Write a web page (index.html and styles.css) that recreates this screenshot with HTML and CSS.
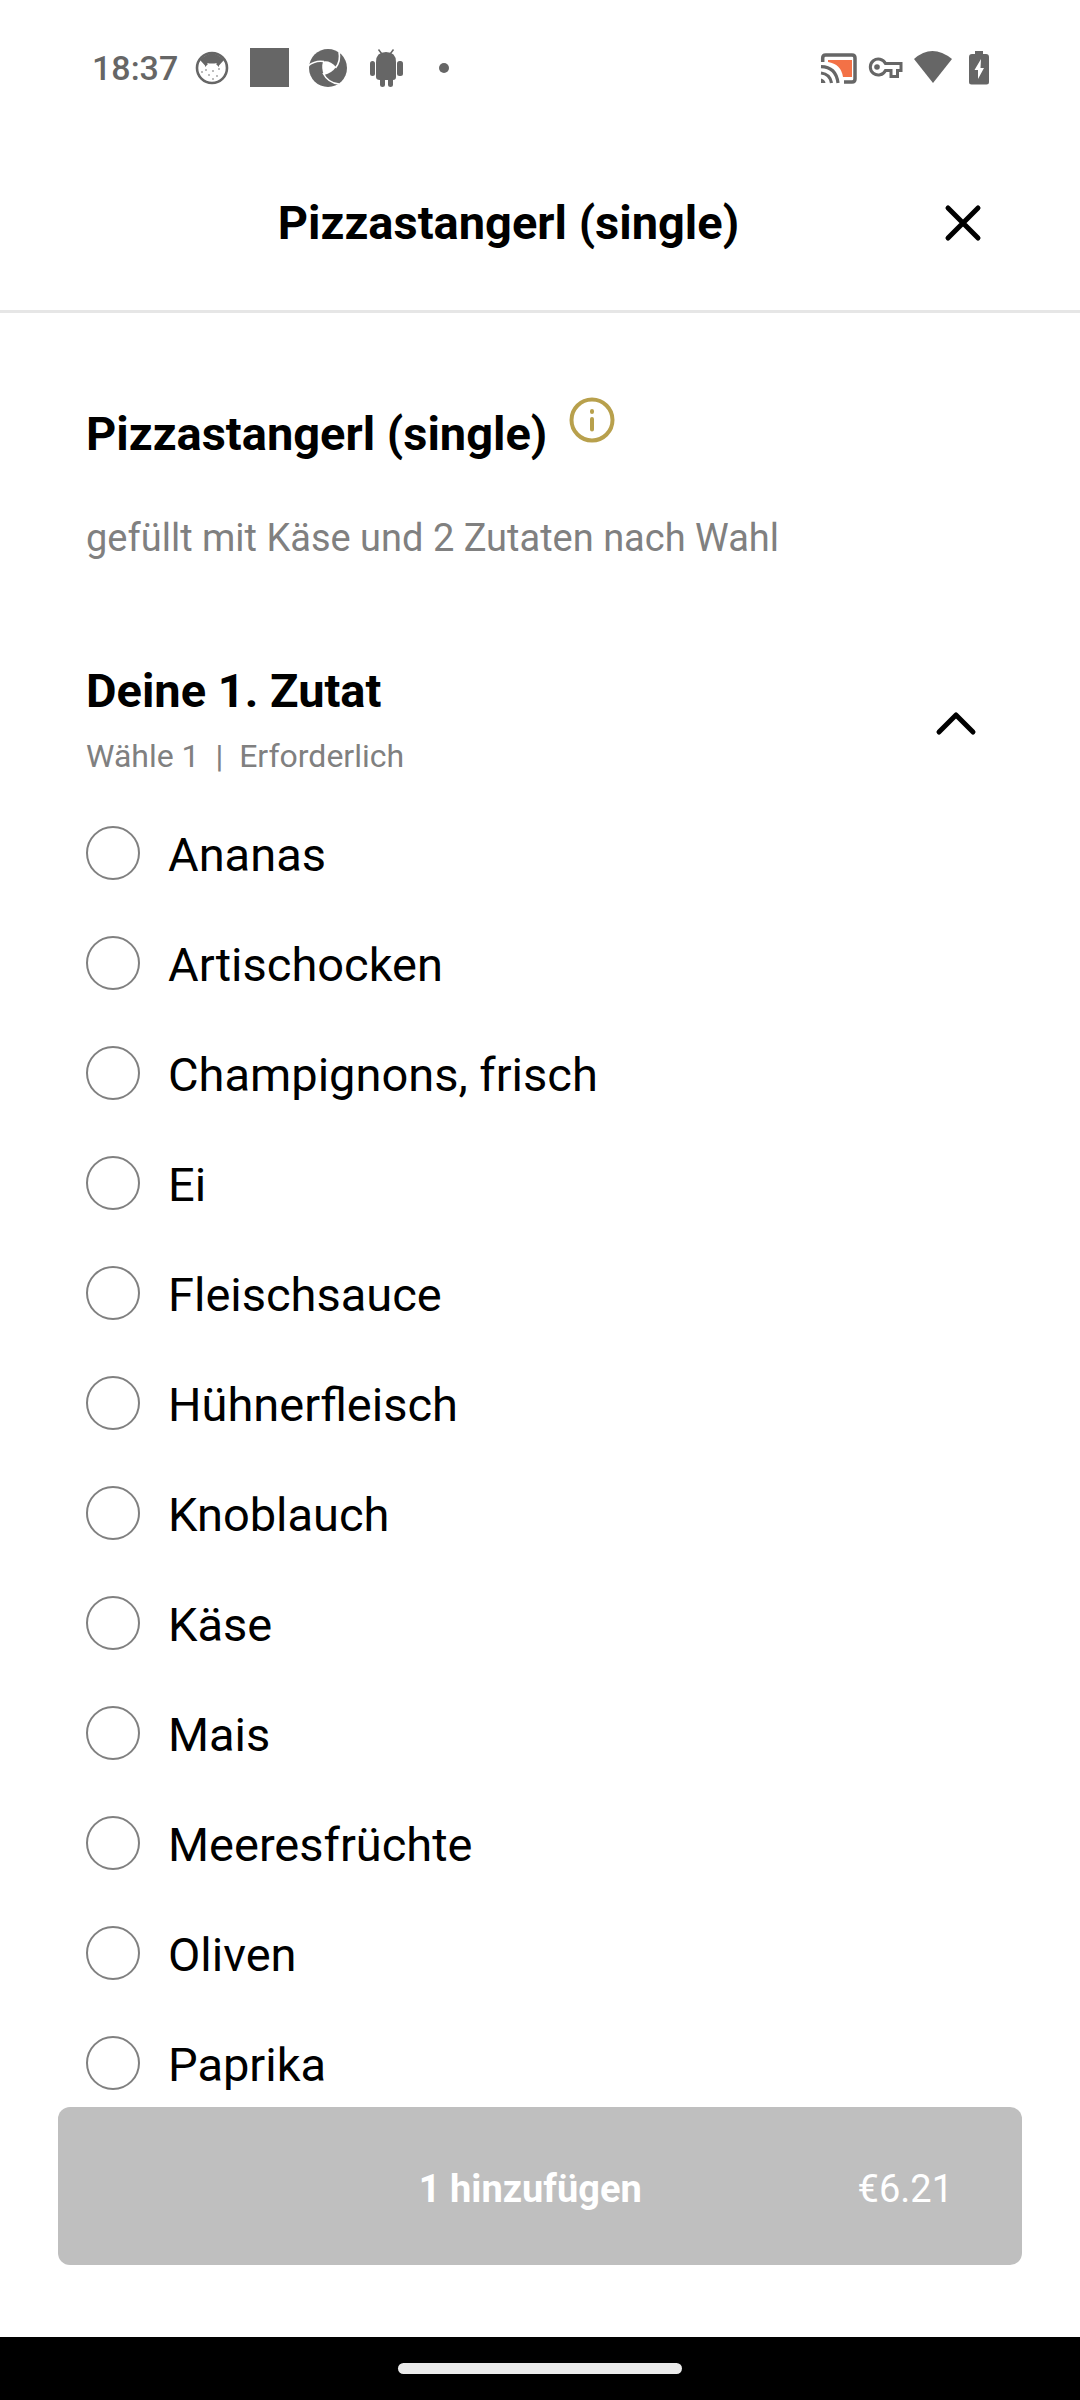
FILE: index.html
```html
<!DOCTYPE html>
<html lang="de">
<head>
<meta charset="utf-8">
<meta name="viewport" content="width=device-width, initial-scale=1">
<title>Pizzastangerl (single)</title>
<link rel="stylesheet" href="styles.css">
</head>
<body>
<div class="status">
  <div class="status-left">
    <time class="clock">18:37</time>
    <svg class="sicon" viewBox="0 0 40 40"><circle cx="20" cy="20" r="15" fill="none" stroke="#666" stroke-width="2.600"/><path d="M8 12Q20-1 32 12L27 17.500L25 15Q20 16 15 15L13 17.500Z"/><path d="M13 13v6l3-3zM27 13v6l-3-3z"/><g><circle cx="14" cy="22" r=".8"/><circle cx="21" cy="23" r=".8"/><circle cx="27" cy="21" r=".8"/><circle cx="17" cy="27" r=".8"/><circle cx="25" cy="28" r=".8"/><circle cx="10" cy="24" r=".8"/><circle cx="21" cy="31" r=".8"/></g></svg>
    <svg class="sicon" viewBox="0 0 40 40"><path d="M0 0h39v39H0z"/></svg>
    <svg class="sicon" viewBox="0 0 40 40"><circle cx="20" cy="20" r="19"/><path fill="#fff" d="M15 13.500Q22 12 28 19Q24 25 16 27Q13 20 15 13.500Z"/><g fill="none" stroke="#fff" stroke-width="1.600"><path d="M0 18Q7 12 16 13.500"/><path d="M31 4Q33 13 27.500 20"/><path d="M15 25Q20 35 31 36"/></g></svg>
    <svg class="sicon" viewBox="0 0 40 40"><path d="M10 14Q10 4 20 4T30 14V29q0 3-3 3v5q0 2-2.500 2T22 37v-5h-3v5q0 2-2.500 2T14 37v-5q-4 0-4-3z"/><rect x="4" y="13" width="5" height="15" rx="2.500"/><rect x="31" y="13" width="6" height="15" rx="2.500"/><path d="M12.500 1.500l3 4M27.500 1.500l-3 4" stroke="#666" stroke-width="1.500"/></svg>
    <svg class="sicon" viewBox="0 0 40 40"><circle cx="20" cy="20" r="5"/></svg>
  </div>
  <div class="status-right">
    <svg class="sicon" viewBox="0 0 40 40"><path d="M10 12h24v17h-9Q23 16 10 14z" fill="#f37146"/><g fill="none" stroke="#666" stroke-width="3.500"><path d="M4.700 14V10q0-3 3-3H34q3 0 3 3v21q0 3-3 3H26"/><path d="M3 18.700Q18 19 20 35M3 25Q12 26 13.500 35" stroke-width="3.200"/></g><path d="M3 30.500q4 1 4.500 4.500H3z"/></svg>
    <svg class="sicon" viewBox="0 0 40 40"><path d="M20.500 15.500H36v7h-3.500v6h-6.500v-6h-5.500a8 8 0 1 1 0-7z" fill="none" stroke="#666" stroke-width="3"/><circle cx="12" cy="19" r="2.800"/></svg>
    <svg class="sicon" viewBox="0 0 40 40"><path d="M2 11Q20-5 40 11L21 35z"/></svg>
    <svg class="sicon" viewBox="0 0 40 40"><path d="M16 3h8v3h3q3 0 3 3v25q0 2.500-2.500 2.500h-15Q10 36.500 10 34V9q0-3 3-3h3z"/><path d="M22 11l-6.500 11H19v9l6-11h-3.500z" fill="#fff"/></svg>
  </div>
</div>

<header class="header">
  <p class="header-title">Pizzastangerl (single)</p>
  <button class="close" type="button" aria-label="Schließen"><svg class="glyph" viewBox="0 0 48 48"><path d="M9 9L39 39M39 9L9 39"/></svg></button>
</header>

<main class="main">
  <div class="product">
    <h1 class="heading product-name">Pizzastangerl (single)</h1>
    <button class="info" type="button" aria-label="Produktinformation"><svg class="info-icon" viewBox="0 0 46 46"><circle cx="23" cy="23" r="20.500"/><path d="M23 22v10.500M23 14v1"/></svg></button>
  </div>
  <p class="description">gefüllt mit Käse und 2 Zutaten nach Wahl</p>

  <section class="group">
    <div class="group-head">
      <div class="group-text">
        <h2 class="heading" id="group1">Deine 1. Zutat</h2>
        <p class="hint">Wähle 1&nbsp; |&nbsp; Erforderlich</p>
      </div>
      <button class="toggle" type="button" aria-label="Einklappen" aria-expanded="true"><svg class="glyph" viewBox="0 0 48 48"><path d="M7 37L24 20L41 37"/></svg></button>
    </div>
    <div class="options" role="radiogroup" aria-labelledby="group1">
      <label class="option"><input class="radio" type="radio" name="zutat"><span>Ananas</span></label>
      <label class="option"><input class="radio" type="radio" name="zutat"><span>Artischocken</span></label>
      <label class="option"><input class="radio" type="radio" name="zutat"><span>Champignons, frisch</span></label>
      <label class="option"><input class="radio" type="radio" name="zutat"><span>Ei</span></label>
      <label class="option"><input class="radio" type="radio" name="zutat"><span>Fleischsauce</span></label>
      <label class="option"><input class="radio" type="radio" name="zutat"><span>Hühnerfleisch</span></label>
      <label class="option"><input class="radio" type="radio" name="zutat"><span>Knoblauch</span></label>
      <label class="option"><input class="radio" type="radio" name="zutat"><span>Käse</span></label>
      <label class="option"><input class="radio" type="radio" name="zutat"><span>Mais</span></label>
      <label class="option"><input class="radio" type="radio" name="zutat"><span>Meeresfrüchte</span></label>
      <label class="option"><input class="radio" type="radio" name="zutat"><span>Oliven</span></label>
      <label class="option"><input class="radio" type="radio" name="zutat"><span>Paprika</span></label>
    </div>
  </section>
</main>

<footer class="footer">
  <div class="action">
    <button class="add" type="button" disabled><span class="add-label">1 hinzufügen</span><span>€6.21</span></button>
  </div>
  <div class="navbar"><div class="pill"></div></div>
</footer>
</body>
</html>
```
FILE: styles.css
```css
* { box-sizing: border-box; }

body {
  margin: 0;
  min-height: 100vh;
  display: flex;
  flex-direction: column;
  background: #fff;
  color: #000;
  font-family: Roboto, sans-serif;
  font-size: 47px;
}

p, h1, h2 { margin: 0; }

button {
  border: 0;
  padding: 0;
  background: none;
  color: inherit;
  font: inherit;
}

svg { display: block; }

/* Status bar */
.status {
  display: flex;
  justify-content: space-between;
  align-items: center;
  height: 136px;
  padding: 0 81px 0 92px;
  color: #666;
}
.status-left { display: flex; align-items: center; gap: 18px; }
.status-right { display: flex; align-items: center; gap: 7px; }
.clock { width: 82px; font-size: 34px; font-weight: 500; line-height: 40px; }
.sicon { width: 40px; height: 40px; fill: #666; }

/* Title bar */
.header {
  display: flex;
  align-items: center;
  height: 177px;
  padding: 0 86px;
  border-bottom: 3px solid #e6e6e6;
}
.header-title {
  flex: 1;
  text-align: center;
  font-weight: 700;
  line-height: 56px;
}
.close { display: flex; justify-content: center; width: 63px; }
.glyph {
  width: 48px;
  height: 48px;
  fill: none;
  stroke: #000;
  stroke-width: 5;
  stroke-linecap: round;
  stroke-linejoin: round;
}

/* Product */
.main { flex: 1; padding: 84px 86px 12px; }
.heading { font-size: 47px; font-weight: 700; line-height: 56px; }
.product { display: flex; align-items: flex-start; gap: 22px; }
.product-name { line-height: 74px; }
.info-icon {
  width: 46px;
  height: 46px;
  fill: none;
  stroke: #b8a04c;
  stroke-width: 4;
  stroke-linecap: round;
}
.description {
  margin-top: 43px;
  color: #808080;
  font-size: 38px;
  line-height: 48px;
}

/* Ingredient group */
.group { margin-top: 101px; }
.group-head { display: flex; justify-content: space-between; align-items: center; }
.hint {
  margin-top: 18px;
  color: #808080;
  font-size: 32px;
  line-height: 38px;
}
.toggle { display: flex; justify-content: center; width: 76px; }
.options {
  display: flex;
  flex-direction: column;
  gap: 52px;
  margin-top: 51px;
}
.option { display: flex; gap: 28px; line-height: 58px; }
.radio {
  appearance: none;
  flex: none;
  width: 54px;
  height: 54px;
  margin: 0;
  border: 2px solid #808080;
  border-radius: 50%;
}
.radio:checked { border-width: 16px; border-color: #b8a04c; }

/* Bottom action */
.footer { position: sticky; bottom: 0; }
.action { padding: 0 58px 72px; }
.add {
  display: flex;
  align-items: center;
  width: 100%;
  height: 158px;
  padding: 6px 69px 0 145px;
  border-radius: 12px;
  background: #bfbfbf;
  color: #fff;
  font-size: 38px;
  line-height: 48px;
}
.add-label { flex: 1; font-weight: 700; text-align: center; }
.navbar {
  display: flex;
  justify-content: center;
  align-items: center;
  height: 63px;
  background: #000;
}
.pill { width: 284px; height: 11px; border-radius: 6px; background: #ebebeb; }
```
